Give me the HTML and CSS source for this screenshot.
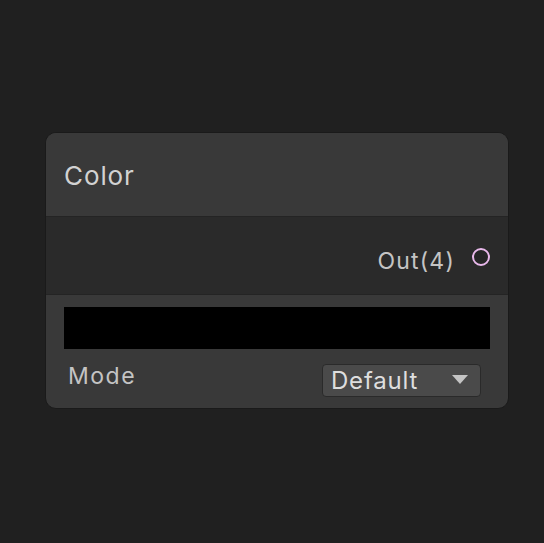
FILE: index.html
```html
<!DOCTYPE html>
<html>
<head>
<meta charset="utf-8">
<link rel="stylesheet" href="styles.css">
</head>
<body>
<div class="node">
  <div class="title">Color</div>
  <div class="ports">
    <span class="port-label">Out(4)</span>
    <span class="port-dot"></span>
  </div>
  <div class="body">
    <div class="swatch"></div>
    <div class="field">
      <span class="field-label">Mode</span>
      <div class="dropdown">
        <span>Default</span>
        <svg class="arrow" width="16" height="10" viewBox="0 0 16 10"><polygon points="0,0 16,0 8,9" fill="#c4c4c4"/></svg>
      </div>
    </div>
  </div>
</div>
</body>
</html>
```
FILE: styles.css
```css
html, body {
  margin: 0;
  background: #202020;
  font-family: Inter, "Noto Sans", sans-serif;
}
body {
  padding: 132px 0 0 45px;
  height: 543px;
  box-sizing: border-box;
}
.node {
  width: 464px;
  box-sizing: border-box;
  border: 1px solid #1a1a1a;
  border-radius: 11px;
  overflow: hidden;
  background: #393939;
}
.title {
  height: 84px;
  display: flex;
  align-items: center;
  padding-left: 18px;
  font-size: 26px;
  letter-spacing: 0.9px;
  color: #d2d2d2;
  background: #393939;
  border-bottom: 1px solid #242424;
  padding-top: 2px;
  box-sizing: border-box;
}
.ports {
  height: 78px;
  background: #2a2a2a;
  border-bottom: 1px solid #242424;
  display: flex;
  align-items: center;
  justify-content: flex-end;
  padding-right: 18px;
  gap: 17px;
  box-sizing: border-box;
}
.port-label {
  font-size: 23px;
  letter-spacing: 1.2px;
  color: #c4c4c4;
  padding-top: 10px;
}
.port-dot {
  width: 14px;
  height: 14px;
  border: 2px solid #e8b8ea;
  border-radius: 50%;
  background: #262626;
  margin-top: 2px;
}
.body {
  padding: 12px 18px 11px 18px;
}
.swatch {
  height: 42px;
  background: #000;
}
.field {
  display: flex;
  justify-content: space-between;
  align-items: center;
  margin-top: 15px;
  padding-left: 4px;
  padding-right: 9px;
}
.field-label {
  font-size: 23px;
  letter-spacing: 1.5px;
  color: #c4c4c4;
  margin-top: -9px;
}
.dropdown {
  width: 159px;
  height: 33px;
  box-sizing: border-box;
  background: #4a4a4a;
  border: 1px solid #2a2a2a;
  border-radius: 4px;
  display: flex;
  align-items: center;
  justify-content: space-between;
  padding: 0 12px 0 8px;
  font-size: 24px;
  letter-spacing: 0.8px;
  color: #dedede;
}
.arrow {
  margin-top: -2px;
}
```
